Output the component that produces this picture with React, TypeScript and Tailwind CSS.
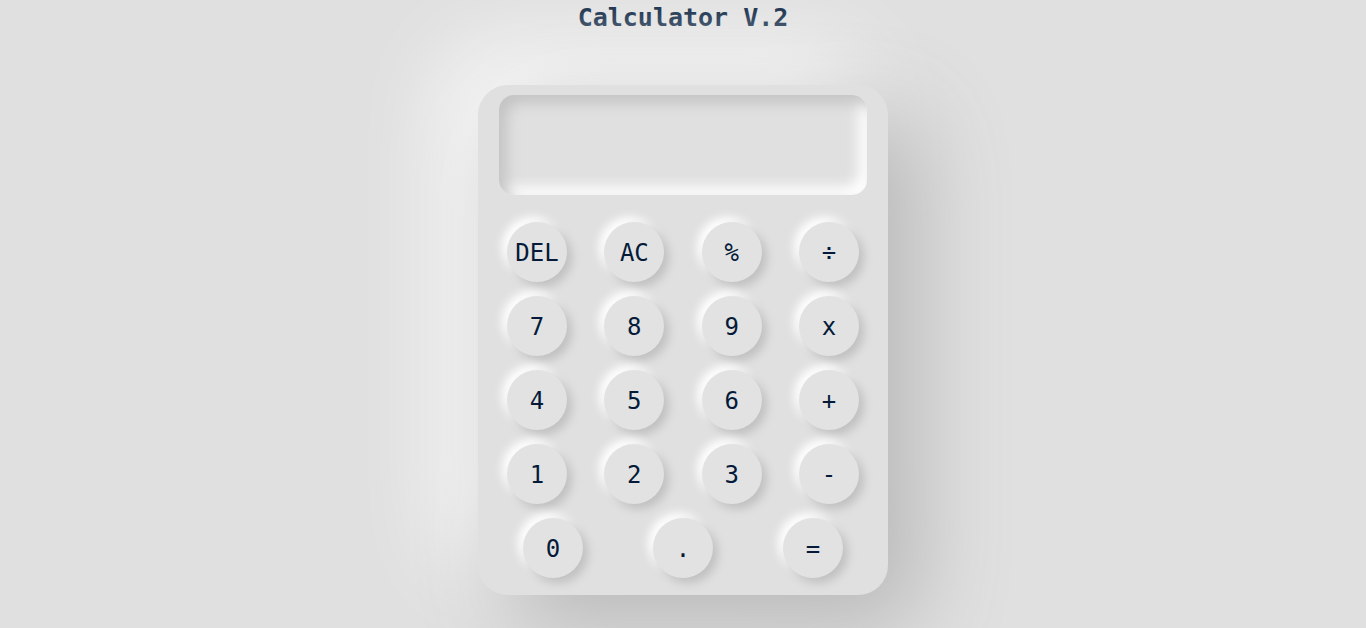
import React from 'react';

const rows: string[][] = [
  ['DEL', 'AC', '%', '÷'],
  ['7', '8', '9', 'x'],
  ['4', '5', '6', '+'],
  ['1', '2', '3', '-'],
];

const Key: React.FC<{ label: string }> = ({ label }) => (
  <button
    type="button"
    className="w-[60px] h-[60px] pt-[2px] rounded-full bg-[#e2e2e2] flex items-center justify-center text-[24px] text-[#041a38] shadow-[5px_5px_10px_#c0c0c0,-5px_-5px_10px_#ffffff]"
    style={{ fontFamily: '"DejaVu Sans Mono", monospace' }}
  >
    {label}
  </button>
);

export default function App() {
  return (
    <div className="min-h-screen bg-[#e0e0e0] flex flex-col items-center">
      <h1
        className="mt-[3px] text-[25px] leading-[30px] font-bold text-[#021a3a]"
        style={{ fontFamily: '"DejaVu Sans Mono", monospace' }}
      >
        Calculator V.2
      </h1>
      <div className="mt-[52px] w-[410px] h-[510px] rounded-[30px] bg-[#e0e0e0] shadow-[30px_30px_90px_#b6b6b6,-30px_-30px_90px_#ffffff] pt-[10px] flex flex-col">
        <div className="mx-[21px] h-[100px] rounded-[15px] bg-[#e0e0e0] shadow-[inset_8px_8px_14px_#c4c4c4,inset_-8px_-8px_14px_#ffffff]" />
        <div className="mt-[27px] flex flex-col gap-[14px]">
          {rows.map((row, i) => (
            <div key={i} className="px-[29px] flex justify-between">
              {row.map((k) => (
                <Key key={k} label={k} />
              ))}
            </div>
          ))}
          <div className="px-[45px] flex justify-between">
            <Key label="0" />
            <Key label="." />
            <Key label="=" />
          </div>
        </div>
      </div>
    </div>
  );
}
